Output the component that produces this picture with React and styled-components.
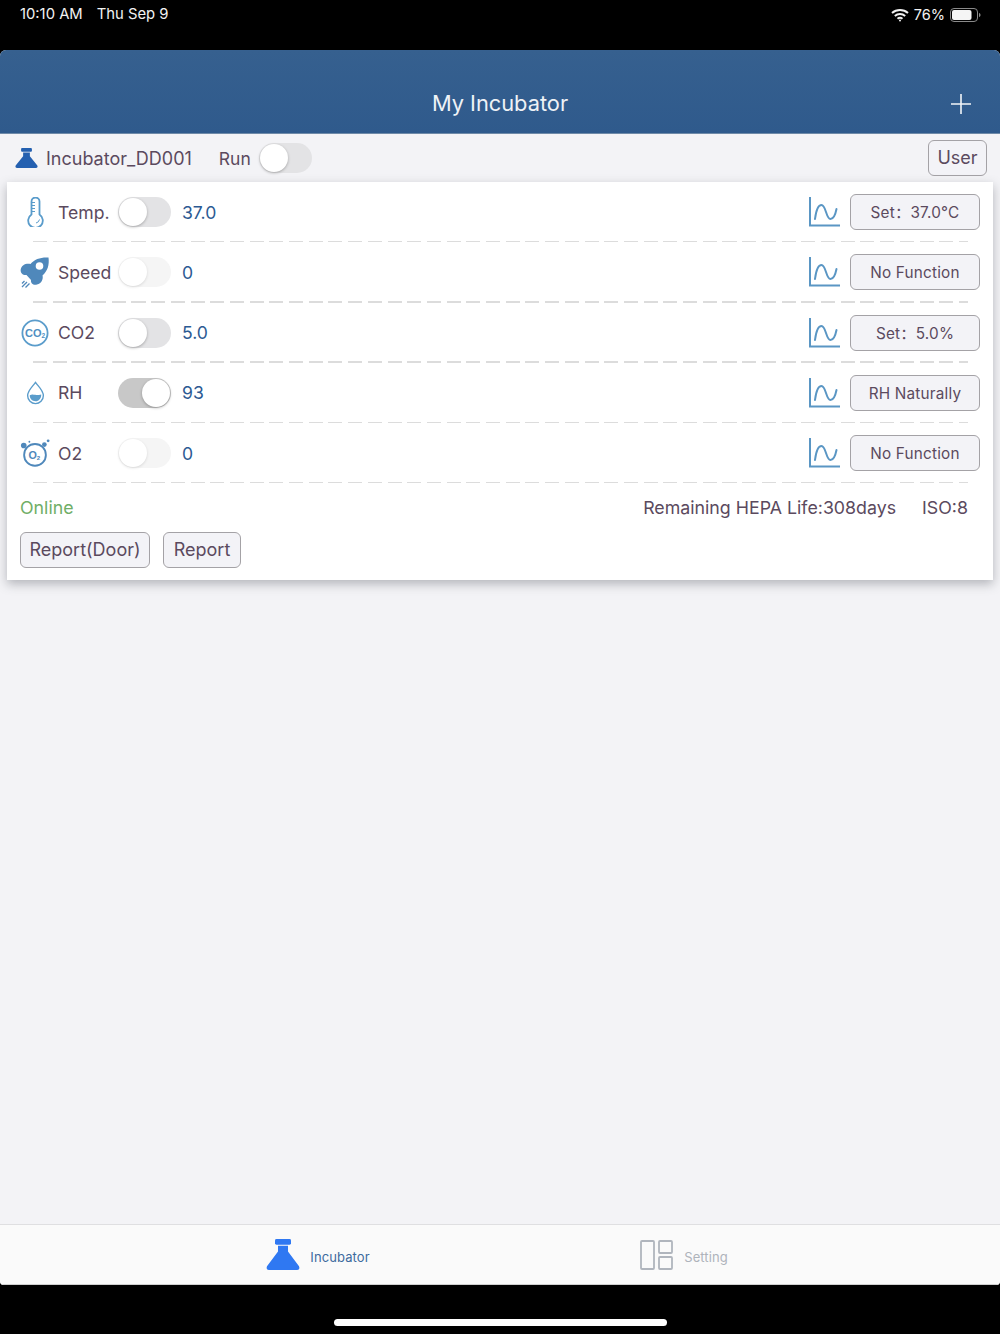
import React from 'react';
import styled, { createGlobalStyle } from 'styled-components';

const Global = createGlobalStyle`
  html, body { margin: 0; padding: 0; background: #000; }
  body { font-family: Inter, "Noto Sans CJK SC", "Noto Sans", "Liberation Sans", sans-serif; }
`;

const Screen = styled.div`
  width: 1000px;
  height: 1334px;
  display: flex;
  flex-direction: column;
  background: #000;
  overflow: hidden;
`;

const StatusBar = styled.div`
  height: 50px;
  flex: none;
  box-sizing: border-box;
  padding: 6px 19px 0 20px;
  display: flex;
  justify-content: space-between;
  align-items: flex-start;
  color: #f2f2f2;
  font-size: 14.800px;
  line-height: 17px;
`;

const StatusLeft = styled.div`
  display: flex;
  gap: 14px;
`;

const StatusRight = styled.div`
  display: flex;
  align-items: center;
  gap: 5px;
  font-size: 14.500px;
`;

const Page = styled.div`
  height: 1235px;
  flex: none;
  display: flex;
  flex-direction: column;
  background: #f3f3f6;
  border-radius: 6px 6px 4px 4px;
  overflow: hidden;
`;

const Header = styled.header`
  height: 84px;
  flex: none;
  box-sizing: border-box;
  padding: 24px 29px 0 0;
  display: flex;
  align-items: center;
  position: relative;
  justify-content: flex-end;
  background: linear-gradient(180deg, #36608f 0%, #2f5a8c 100%);
  border-bottom: 1px solid #6f8aa8;
`;

const Title = styled.h1`
  position: absolute;
  left: 0;
  right: 0;
  top: 39px;
  margin: 0;
  text-align: center;
  font-size: 21.800px;
  line-height: 28px;
  font-weight: 400;
  color: #eef2f6;
`;

const DeviceBar = styled.div`
  height: 48px;
  flex: none;
  box-sizing: border-box;
  padding: 0 13px 0 15px;
  display: flex;
  align-items: center;
`;

const DeviceName = styled.span`
  margin-left: 8px;
  margin-right: 27px;
  font-size: 18px;
  color: #5b4a5e;
`;

const RunLabel = styled.span`
  margin-right: 8px;
  font-size: 17.500px;
  color: #5b4a5e;
`;

const OutlineButton = styled.button`
  box-sizing: border-box;
  height: 36px;
  width: ${p => p.$w}px;
  padding: 0;
  border: 1.5px solid #a4a2a6;
  border-radius: 6px;
  background: #f3f3f7;
  color: #5b4a5e;
  font-family: inherit;
  font-size: 18px;
  line-height: 20px;
  white-space: pre;
`;

const UserButton = styled(OutlineButton)`
  margin-left: auto;
`;

const ActionButton = styled(OutlineButton)`
  padding-top: 2px;
  font-size: 15.300px;
  letter-spacing: 0.2px;
`;

const Card = styled.section`
  margin: 0 7px;
  height: 398px;
  flex: none;
  box-sizing: border-box;
  background: #fff;
  box-shadow: 0 4px 10px rgba(60, 64, 75, 0.35);
  display: flex;
  flex-direction: column;
`;

const Row = styled.div`
  height: 60.250px;
  flex: none;
  box-sizing: border-box;
  padding: 0 13px;
  display: flex;
  align-items: center;
  position: relative;
  &::after {
    content: '';
    position: absolute;
    left: 26px;
    right: 25px;
    bottom: 0;
    height: 1.5px;
    background: repeating-linear-gradient(90deg, #dcdcdc 0 14px, transparent 14px 19.700px);
  }
`;

const IconSlot = styled.div`
  width: 30px;
  height: 36px;
  flex: none;
  display: flex;
  align-items: center;
  justify-content: center;
`;

const RowLabel = styled.span`
  width: 60px;
  margin-left: 8px;
  font-size: 17.600px;
  color: #5b4a5e;
  white-space: nowrap;
`;

const Value = styled.span`
  margin-left: 11px;
  font-size: 17.600px;
  color: #2c5a93;
`;

const ChartSlot = styled.div`
  margin-left: auto;
  margin-right: 10px;
  display: flex;
`;

const Track = styled.div`
  width: 53px;
  height: 30px;
  flex: none;
  box-sizing: border-box;
  border-radius: 15px;
  display: flex;
  align-items: center;
  justify-content: ${p => (p.$on ? 'flex-end' : 'flex-start')};
  background: ${p => (p.$on ? '#c8c8c8' : p.$faint ? '#f5f5f5' : '#e3e3e5')};
  padding: 1px;
`;

const Knob = styled.div`
  width: 28px;
  height: 28px;
  border-radius: 50%;
  background: #fff;
  box-shadow: 0 1px 3px rgba(0, 0, 0, ${p => (p.$faint ? 0.12 : 0.28)});
`;

const StatusRow = styled.div`
  height: 49px;
  flex: none;
  box-sizing: border-box;
  padding: 0 25px 0 13px;
  display: flex;
  align-items: center;
  font-size: 17.800px;
  color: #5b4a5e;
`;

const Online = styled.span`
  color: #6fae67;
  margin-right: auto;
`;

const Iso = styled.span`
  margin-left: 26px;
`;

const ReportRow = styled.div`
  padding: 0 13px;
  display: flex;
  gap: 13px;
`;

const Spacer = styled.div`
  flex: 1;
`;

const TabBar = styled.nav`
  height: 61px;
  flex: none;
  box-sizing: border-box;
  padding: 0 133px 0 135px;
  display: flex;
  background: #fafafa;
  border-top: 1.5px solid #dfdfe1;
  border-bottom: 1px solid #cfcfcf;
`;

const Tab = styled.div`
  width: 366px;
  display: flex;
  align-items: center;
  justify-content: center;
  gap: ${p => p.$gap}px;
  font-size: 13px;
  letter-spacing: 0.1px;
  color: ${p => (p.$active ? '#3d6a9e' : '#aeb3bb')};
`;

const TabLabel = styled.span`
  margin-top: 4px;
`;

const HomeZone = styled.div`
  flex: 1;
  display: flex;
  align-items: center;
  justify-content: center;
  padding-top: 25px;
  box-sizing: border-box;
`;

const HomeBar = styled.div`
  width: 333px;
  height: 7px;
  border-radius: 4px;
  background: #fff;
`;

const Flask = ({ w = 23, h = 20, color = '#2460b0' }) => (
  <svg width={w} height={h} viewBox="0 0 34 32" preserveAspectRatio="none">
    <rect x="9" y="0" width="16" height="6" rx="1.500" fill={color} />
    <path d="M12 7h10v6l11 15c1 2 0 4-2 4H3c-2 0-3-2-2-4l11-15z" fill={color} />
  </svg>
);

const Thermometer = () => (
  <svg width="17" height="30" viewBox="0 0 17 30" fill="none" stroke="#5a9ccb" strokeWidth="1.800">
    <path d="M4.500 17.500V4.500a4 4 0 0 1 8 0v13a7.300 7.300 0 1 1-8 0z" strokeLinejoin="round" />
    <path d="M5 5.500h3M5 8.500h3M5 11.500h3M5 14.500h3" strokeWidth="1" />
    <path d="M9 26a4.500 4.500 0 0 0 3.500-3.500" strokeWidth="1" />
  </svg>
);

const Rocket = () => (
  <svg width="30" height="31" viewBox="0 0 30 31" fill="#4f88bb">
    <path d="M28.500 .5C21 0 14.500 2 10.500 7 6 6 1.500 8 .7 12.500 .2 16 3 18.500 6.500 18L11 23C10.500 26.500 13.500 28.500 17 27.500 21.500 26.500 23.500 22 22.500 18.500 27.500 14 29.500 8 28.500 .5z" />
    <circle cx="19.500" cy="9" r="3.800" fill="#fff" />
    <path d="M2 30l5-5M5.500 30.500l4-4M2 26.500l2.500-2.500" stroke="#4f88bb" strokeWidth="1.300" fill="none" />
  </svg>
);

const Co2Icon = () => (
  <svg width="28" height="28" viewBox="0 0 28 28">
    <circle cx="14" cy="14" r="12.600" fill="none" stroke="#5a9ccb" strokeWidth="1.800" />
    <text x="4" y="18" fontFamily="Liberation Sans, sans-serif" fontSize="11" fontWeight="700" fill="#4f8fc2">
      CO<tspan fontSize="6.500" dy="1">2</tspan>
    </text>
  </svg>
);

const Drop = () => (
  <svg width="19" height="24" viewBox="0 0 20 26">
    <path d="M10 1.500C7 6 1.500 10 1.500 16a8.500 8.500 0 0 0 17 0C18.500 10 13 6 10 1.500z" fill="#fff" stroke="#5a9ccb" strokeWidth="1.500" />
    <path d="M3.800 15.500c2-1.500 4-1 6-.5s4 0 6.400-.5c.3 4-2.700 7.500-6.200 7.500s-6.500-3-6.200-6.500z" fill="#5a9ccb" />
  </svg>
);

const O2Icon = () => (
  <svg width="32" height="32" viewBox="0 0 32 32">
    <circle cx="4" cy="8" r="3" fill="#4f88bb" />
    <circle cx="10" cy="4" r="1" fill="#4f88bb" />
    <circle cx="26" cy="7" r="2.500" fill="#4f88bb" />
    <circle cx="30" cy="3" r="1.500" fill="#4f88bb" />
    <circle cx="16" cy="18" r="11.600" fill="none" stroke="#4f88bb" strokeWidth="2" />
    <text x="9" y="22" fontFamily="Liberation Sans, sans-serif" fontSize="11.500" fontWeight="700" fill="#4f88bb">
      O<tspan fontSize="6.500" dy="1">2</tspan>
    </text>
  </svg>
);

const ChartIcon = () => (
  <svg width="31" height="30" viewBox="0 0 31 30" fill="none" stroke="#5a96c4" strokeWidth="2">
    <path d="M1 0v28.600h30" />
    <path d="M6 22C7 14 9 8 12.500 8 17 8 17 22 21.500 22 25 22 26.500 17 27.500 12" strokeLinecap="round" />
  </svg>
);

const LayoutIcon = () => (
  <svg width="33" height="30" viewBox="0 0 33 30" fill="none" stroke="#b0b5bd" strokeWidth="1.800">
    <rect x="1" y="1" width="13" height="28" rx="1" />
    <rect x="19" y="1" width="13" height="12" rx="1" />
    <rect x="19" y="17" width="13" height="12" rx="1" />
  </svg>
);

const Wifi = () => (
  <svg width="18" height="14" viewBox="0 0 18 14" fill="none" stroke="#f2f2f2" strokeWidth="2">
    <path d="M1 5c4.500-4 11.500-4 16 0M3.800 8c3-2.600 7.400-2.600 10.400 0M6.500 10.800c1.500-1.200 3.500-1.200 5 0" />
    <circle cx="9" cy="12.600" r="1" fill="#f2f2f2" stroke="none" />
  </svg>
);

const Battery = () => (
  <svg width="31" height="14" viewBox="0 0 31 14">
    <rect x="0.500" y="0.500" width="27" height="13" rx="3.500" fill="none" stroke="#8a8a8a" />
    <rect x="2" y="2" width="19.500" height="10" rx="2" fill="#f5f5f5" />
    <path d="M29 5c1 .3 1.500 1 1.500 2s-.5 1.700-1.500 2z" fill="#8a8a8a" />
  </svg>
);

const Toggle = ({ on, faint }) => (
  <Track $on={on} $faint={faint}>
    <Knob $faint={faint} />
  </Track>
);

const rows = [
  { label: 'Temp.', value: '37.0', icon: <Thermometer />, action: 'Set：37.0°C' },
  { label: 'Speed', value: '0', icon: <Rocket />, action: 'No Function', faint: true },
  { label: 'CO2', value: '5.0', icon: <Co2Icon />, action: 'Set：5.0%' },
  { label: 'RH', value: '93', icon: <Drop />, action: 'RH Naturally', on: true },
  { label: 'O2', value: '0', icon: <O2Icon />, action: 'No Function', faint: true },
];

export default function App() {
  return (
    <Screen>
      <Global />
      <StatusBar>
        <StatusLeft>
          <span>10:10 AM</span>
          <span>Thu Sep 9</span>
        </StatusLeft>
        <StatusRight>
          <Wifi />
          <span>76%</span>
          <Battery />
        </StatusRight>
      </StatusBar>
      <Page>
        <Header>
          <Title>My Incubator</Title>
          <svg width="20" height="20" viewBox="0 0 20 20" stroke="#f2f5f8" strokeWidth="1.600">
            <path d="M10 0v20M0 10h20" />
          </svg>
        </Header>
        <DeviceBar>
          <Flask />
          <DeviceName>Incubator_DD001</DeviceName>
          <RunLabel>Run</RunLabel>
          <Toggle />
          <UserButton $w={59}>User</UserButton>
        </DeviceBar>
        <Card>
          {rows.map(r => (
            <Row key={r.label}>
              <IconSlot>{r.icon}</IconSlot>
              <RowLabel>{r.label}</RowLabel>
              <Toggle on={r.on} faint={r.faint} />
              <Value>{r.value}</Value>
              <ChartSlot><ChartIcon /></ChartSlot>
              <ActionButton $w={130}>{r.action}</ActionButton>
            </Row>
          ))}
          <StatusRow>
            <Online>Online</Online>
            <span>Remaining HEPA Life:308days</span>
            <Iso>ISO:8</Iso>
          </StatusRow>
          <ReportRow>
            <OutlineButton $w={130}>Report(Door)</OutlineButton>
            <OutlineButton $w={78}>Report</OutlineButton>
          </ReportRow>
        </Card>
        <Spacer />
        <TabBar>
          <Tab $active $gap={10}>
            <Flask w={34} h={31} color="#2f78f2" />
            <TabLabel>Incubator</TabLabel>
          </Tab>
          <Tab $gap={11}>
            <LayoutIcon />
            <TabLabel>Setting</TabLabel>
          </Tab>
        </TabBar>
      </Page>
      <HomeZone>
        <HomeBar />
      </HomeZone>
    </Screen>
  );
}
